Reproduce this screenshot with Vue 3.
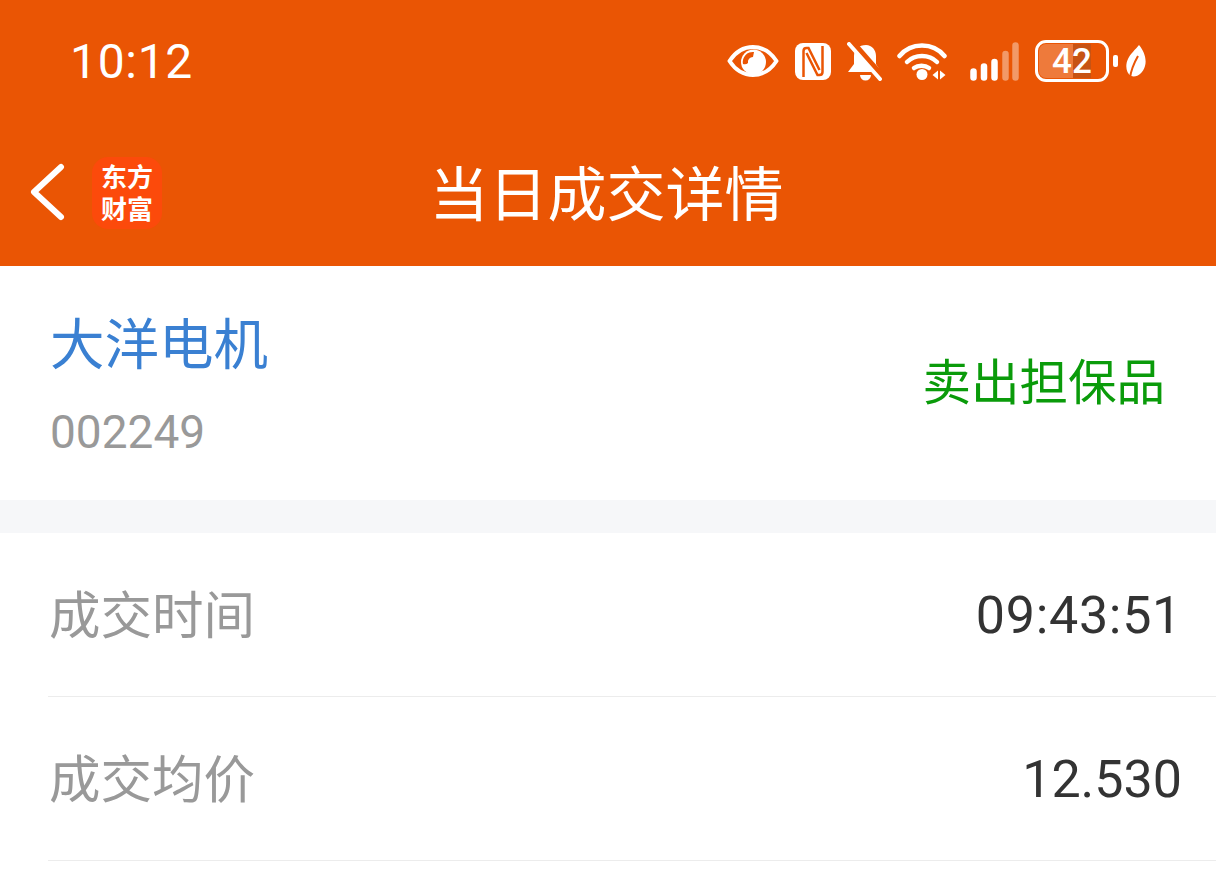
<script setup>
const rows = [
  { label: '成交时间', value: '09:43:51' },
  { label: '成交均价', value: '12.530' },
];
</script>

<template>
  <div class="page">
    <header class="head">
      <div class="status">
        <span class="time">10:12</span>
        <div class="icons">
          <svg class="eye" width="52" height="32" viewBox="0 0 52 32">
            <path d="M2.500 16C9 6 17 2 26 2s17 4 23.500 14C43 26 35 30 26 30S9 26 2.500 16z" fill="none" stroke="#fff" stroke-width="4" stroke-linejoin="round" />
            <circle cx="26.500" cy="17" r="12.500" fill="#fff" />
            <path d="M16 19a10 10 0 0 1 11-12l-1 5a5 5 0 0 0-5 6q-2 2-5 1z" fill="#ea5504" />
          </svg>
          <svg class="nfc" width="36" height="37" viewBox="0 0 36 37">
            <rect width="36" height="37" rx="8" fill="#fff" />
            <path d="M8.500 34V8q0-3 3-3h2l11 22M27.500 3v26q0 3-3 3h-2L11.500 10" fill="none" stroke="#ea5504" stroke-width="2.500" />
          </svg>
          <svg class="bell" width="35" height="39" viewBox="0 0 35 39">
            <path d="M19 3c6 0 10 5 10 11v8l5 8H1l6-8v-8c0-7 5-11 12-11z" fill="#fff" />
            <path d="M13 33h11a5.500 5.500 0 0 1-11 0z" fill="#fff" />
            <path d="M6 1l29 33" stroke="#ea5504" stroke-width="6" />
            <path d="M2 2l31 35" stroke="#fff" stroke-width="4" stroke-linecap="round" />
          </svg>
          <svg class="wifi" width="50" height="40" viewBox="0 0 50 40">
            <g fill="none" stroke="#fff" stroke-width="4.500" stroke-linecap="round">
              <path d="M2.500 15C14 1 36 1 47.500 15" />
              <path d="M10 21c8-8 22-8 30 0" />
              <path d="M17 27c4-3 11-3 15 0" />
            </g>
            <circle cx="25" cy="33.500" r="5.500" fill="#fff" />
            <path d="M41 29.500v9l-5.500-4.500zM43 29.500v9l5.500-4.500z" fill="#fff" />
          </svg>
          <svg class="signal" width="49" height="39" viewBox="0 0 49 39">
            <g stroke="#fff" stroke-width="6.500" stroke-linecap="round">
              <path d="M3.500 29.500v6M14 24.500v11M24.500 20v15.500" />
              <path d="M35.500 12v23.500M45.500 3.500v32" stroke-opacity="0.4" />
            </g>
          </svg>
          <div class="battery">
            <span class="fill"></span>
            <span class="fill-rest"></span>
            <span class="level">42</span>
          </div>
          <span class="nub"></span>
          <svg class="leaf" width="20" height="33" viewBox="0 0 20 33">
            <path d="M13 0c5 6 8 14 6 21-2 7-8 12-14 10C0 28-1 20 2 14 4 9 10 4 13 0z" fill="#fff" />
            <path d="M4 33C5 25 8 18 12 11" fill="none" stroke="#ea5504" stroke-width="2" />
          </svg>
        </div>
      </div>
      <div class="nav">
        <svg class="back" width="36" height="58" viewBox="0 0 36 58">
          <path d="M32 4L5 29l27 25" fill="none" stroke="#fff" stroke-width="6" stroke-linecap="round" stroke-linejoin="round" />
        </svg>
        <div class="logo">东方<br />财富</div>
        <h1 class="title">当日成交详情</h1>
      </div>
    </header>

    <section class="stock">
      <div class="names">
        <div class="name">大洋电机</div>
        <div class="code">002249</div>
      </div>
      <div class="side">卖出担保品</div>
    </section>

    <div class="gap"></div>

    <div v-for="row in rows" :key="row.label" class="row">
      <span class="label">{{ row.label }}</span>
      <span class="value" :class="{ clock: row.value.includes(':') }">{{ row.value }}</span>
    </div>
  </div>
</template>

<style scoped>
.page {
  height: 887px;
  overflow: hidden;
  background: #fff;
  font-family: "Noto Sans CJK SC", "Noto Sans", sans-serif;
}
.head {
  background: #ea5504;
  color: #fff;
}
.status {
  height: 122px;
  display: flex;
  align-items: center;
  justify-content: space-between;
  padding: 0 70px;
}
.time {
  font-family: Roboto, sans-serif;
  font-size: 48px;
  letter-spacing: 0.7px;
}
.icons {
  display: flex;
  align-items: center;
}
.icons svg {
  display: block;
}
.nfc, .bell {
  margin-left: 16px;
}
.wifi {
  margin-left: 15px;
}
.signal {
  margin-left: 23px;
}
.battery {
  position: relative;
  width: 74px;
  height: 42px;
  box-sizing: border-box;
  border: 3px solid #fff;
  border-radius: 11px;
  margin-left: 16px;
  display: flex;
  align-items: center;
  justify-content: center;
}
.fill {
  position: absolute;
  left: 1px;
  top: 1px;
  bottom: 1px;
  width: 34px;
  border-radius: 7px 0 0 7px;
  background: rgba(255, 255, 255, 0.22);
}
.fill-rest {
  position: absolute;
  left: 35px;
  top: 1px;
  bottom: 1px;
  width: 18px;
  background: rgba(120, 80, 60, 0.3);
}
.level {
  position: relative;
  font-family: Roboto, sans-serif;
  font-weight: 500;
  font-size: 35px;
}
.nub {
  width: 5px;
  height: 12px;
  border-radius: 2px;
  background: #fff;
  margin-left: 4px;
}
.leaf {
  margin-left: 8px;
}
.nav {
  position: relative;
  height: 144px;
  display: flex;
  align-items: center;
  justify-content: center;
}
.back {
  position: absolute;
  left: 29px;
  top: 41px;
}
.logo {
  position: absolute;
  left: 92px;
  top: 35px;
  width: 70px;
  height: 72px;
  border-radius: 16px;
  background: #fc4a0b;
  text-align: center;
  font-size: 26px;
  line-height: 32px;
  font-weight: 700;
  padding-top: 3px;
  box-sizing: border-box;
}
.title {
  margin: 0 3px 8px 0;
  font-size: 59px;
  font-weight: 400;
}
.stock {
  height: 234px;
  box-sizing: border-box;
  padding: 0 51px 3px 50px;
  display: flex;
  align-items: center;
  justify-content: space-between;
}
.name {
  font-size: 54.500px;
  line-height: 80px;
  color: #3a80d2;
}
.code {
  font-family: Roboto, sans-serif;
  font-size: 46px;
  line-height: 60px;
  color: #999;
  margin-top: 21px;
}
.side {
  font-size: 48.500px;
  color: #0a9b0a;
  margin-bottom: 5px;
}
.gap {
  height: 33px;
  background: #f6f7f9;
}
.row {
  height: 164px;
  box-sizing: border-box;
  margin-left: 48px;
  padding: 0 34px 0 1px;
  border-bottom: 1px solid #ececec;
  display: flex;
  align-items: center;
  justify-content: space-between;
}
.label {
  font-size: 51.500px;
  color: #999;
  margin-bottom: 6px;
}
.value {
  font-family: Roboto, sans-serif;
  font-size: 52px;
  color: #333;
  margin-top: 2px;
}
.clock {
  letter-spacing: 0.7px;
}
</style>
